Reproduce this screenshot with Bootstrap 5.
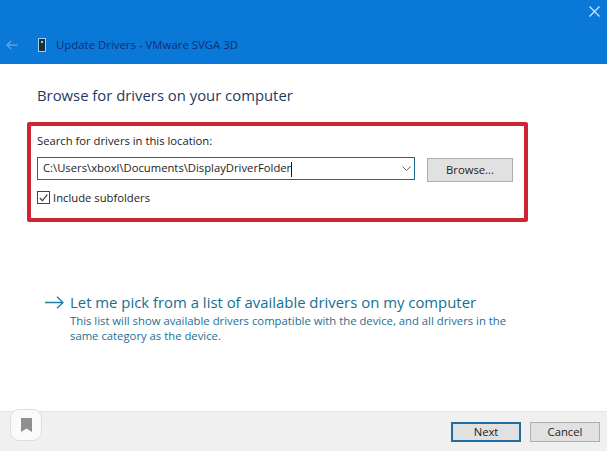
<!doctype html>
<html lang="en"><head><meta charset="utf-8"><title>Update Drivers</title>
<link rel="stylesheet" href="https://cdn.jsdelivr.net/npm/bootstrap@5.3.0/dist/css/bootstrap.min.css">
<style>
html,body{height:451px;overflow:hidden}
body{width:607px;font-family:"Open Sans","Noto Sans",sans-serif;font-size:11.25px;color:#222;background:#fff;line-height:16px}
.wiz{height:451px}
.wiz-head{height:64px;background:#0a78d7;padding:0 7px 0 6px}
.wiz-close{height:27px;padding-top:6px}
.wiz-titlebar{height:36px}
.wiz-title{font-size:11.4px;color:#0f2f78;margin-left:10px}
.wiz-devicon{margin-left:20px}
.wiz-body{padding:0 0 0 27px}
.wiz-h{font-size:14.85px;line-height:20px;color:#1f3a5f;margin:21px 0 17px 10px;font-weight:400}
.wiz-box{width:501px;height:100px;border:4px solid #cf2433;border-radius:2px;padding:6px 6px 0 6px}
.wiz-label{line-height:16px;margin-bottom:8px;margin-top:1px}
.wiz-input{width:378px;height:23px;border:1px solid #1c6a86;padding:0 3px 0 5px;color:#222}
.wiz-caret{width:1px;height:15px;background:#111;display:inline-block;vertical-align:middle}
.wiz-browse{width:86px;height:24px;margin-left:12px;margin-top:1px;background:#e1e1e1;border:1px solid #adadad;border-radius:0;padding:0;font-size:11.25px;line-height:20px;color:#222}
.wiz-check{margin-top:9px;height:13px}
.wiz-box-check{width:13px;height:13px;border:1px solid #444;margin-right:3px;background:#fff}
.wiz-link{margin:70px 0 0 18px;color:#14708f}
.wiz-link-h{font-size:14.9px;line-height:20px;margin-left:6px}
.wiz-link-sub{font-size:11.3px;line-height:15px;margin:1px 0 0 25px;width:445px;color:#1b6f92}
.wiz-foot{height:40px;background:#f0f0f0;border-top:1px solid #e5e5e7;padding:10px 7px 0 0}
.wiz-btn{width:70px;height:20px;background:#e1e1e1;border:1px solid #adadad;border-radius:0;padding:0;font-size:11.25px;line-height:16px;color:#222}
.wiz-btn-def{border:2px solid #1f6d9e;line-height:16px;margin-right:1px}
.wiz-mark{position:absolute;left:10px;top:409px;width:32px;height:32px;background:#fafafa;border:1px solid #dedede;border-radius:9px}
</style></head>
<body>
<div class="wiz d-flex flex-column position-relative">
  <div class="wiz-head">
    <div class="wiz-close d-flex justify-content-end">
      <svg width="11" height="11" viewBox="0 0 11 11"><path d="M.5.5l10 10M10.500.5l-10 10" stroke="#cfe8fb" stroke-width="1.2" fill="none"/></svg>
    </div>
    <div class="wiz-titlebar d-flex align-items-center">
      <svg width="12" height="10" viewBox="0 0 12 10"><path d="M11.500 5H1M5 1L1 5l4 4" stroke="#5ba3e0" stroke-width="1.5" fill="none"/></svg>
      <svg class="wiz-devicon" width="8" height="14" viewBox="0 0 8 14"><rect x=".5" y=".5" width="7" height="13" fill="#1c2f3c" stroke="#9fd0e6"/><rect x="3" y="3" width="2" height="2" fill="#9fd0e6"/></svg>
      <span class="wiz-title">Update Drivers - VMware SVGA 3D</span>
    </div>
  </div>
  <div class="wiz-body flex-grow-1">
    <h1 class="wiz-h">Browse for drivers on your computer</h1>
    <div class="wiz-box">
      <div class="wiz-label">Search for drivers in this location:</div>
      <div class="d-flex align-items-start">
        <div class="wiz-input d-flex align-items-center justify-content-between">
          <span>C:\Users\xboxl\Documents\DisplayDriverFolder<span class="wiz-caret"></span></span>
          <svg width="9" height="5" viewBox="0 0 11 6"><path d="M.5.5l5 5 5-5" stroke="#444" fill="none"/></svg>
        </div>
        <button class="btn wiz-browse" type="button">Browse...</button>
      </div>
      <div class="wiz-check d-flex align-items-center">
        <span class="wiz-box-check d-flex align-items-center justify-content-center"><svg width="9" height="8" viewBox="0 0 10 9"><path d="M.8 4.500l3 3L9.300.8" stroke="#333" stroke-width="1.2" fill="none"/></svg></span>
        <span>Include subfolders</span>
      </div>
    </div>
    <div class="wiz-link">
      <div class="d-flex align-items-center">
        <svg width="19" height="13" viewBox="0 0 19 13"><path d="M0 6.500h18M12 .7l6 5.800-6 5.800" stroke="#1b7fa8" stroke-width="1.3" fill="none"/></svg>
        <span class="wiz-link-h">Let me pick from a list of available drivers on my computer</span>
      </div>
      <div class="wiz-link-sub">This list will show available drivers compatible with the device, and all drivers in the same category as the device.</div>
    </div>
  </div>
  <div class="wiz-foot d-flex justify-content-end gap-2">
    <button class="btn wiz-btn wiz-btn-def" type="button">Next</button>
    <button class="btn wiz-btn" type="button">Cancel</button>
  </div>
  <div class="wiz-mark d-flex align-items-center justify-content-center">
    <svg width="11" height="14" viewBox="0 0 11 14"><path d="M0 0h11v14L5.500 10.500 0 14z" fill="#8f8f8f"/></svg>
  </div>
</div>
</body></html>
